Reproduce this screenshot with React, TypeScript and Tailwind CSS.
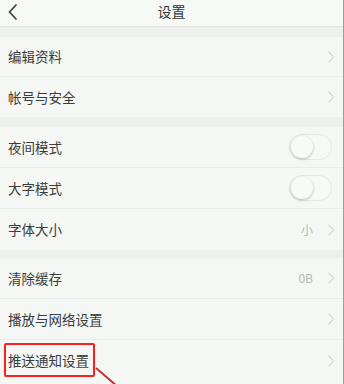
import { ReactNode } from "react";

function Chevron() {
  return (
    <svg width="8" height="14" viewBox="0 0 8 14" className="ml-2">
      <path d="M1.5 1.5 L6.5 7 L1.5 12.5" fill="none" stroke="#d6d9d6" strokeWidth="1.2" />
    </svg>
  );
}

function Toggle() {
  return (
    <div className="relative w-[43px] h-[26px] rounded-full border border-[#e4e7e4] bg-[#f7f9f7] mr-[3px]">
      <div className="absolute left-[1px] top-[1px] w-[22px] h-[22px] rounded-full bg-[#f8faf8] shadow-[0_1px_3px_rgba(0,0,0,0.25)]" />
    </div>
  );
}

function Row({
  label,
  h = "h-[41px]",
  right,
  last,
}: {
  label: ReactNode;
  h?: string;
  right?: ReactNode;
  last?: boolean;
}) {
  return (
    <div
      className={`flex items-center justify-between pl-[8px] pr-[8px] ${h} ${
        last ? "" : "border-b border-[#e9ece9]"
      }`}
    >
      <span className="text-[13.5px] text-[#3a3d3a]">{label}</span>
      <div className="flex items-center text-[12px] text-[#b4b7b4]">{right}</div>
    </div>
  );
}

export default function App() {
  return (
    <div
      className="relative w-[344px] h-[384px] overflow-hidden bg-[#f4f7f4] border-r border-[#9a9d9a]"
      style={{ fontFamily: '"Noto Sans CJK SC", "Noto Sans", sans-serif' }}
    >
      <div className="relative flex items-center justify-center h-[27px] border-b border-[#e2e5e2] bg-[#f6f9f6]">
        <svg width="12" height="18" viewBox="0 0 12 18" className="absolute left-[7px] top-[3px]">
          <path d="M9.5 1.5 L2.5 9 L9.5 16.5" fill="none" stroke="#3a3d3a" strokeWidth="1.6" />
        </svg>
        <span className="text-[14px] text-[#333633] mt-[-4px]">设置</span>
      </div>
      <div className="h-[10px] bg-[#edf0ed]" />
      <Row label="编辑资料" h="h-[40px]" right={<Chevron />} />
      <Row label="帐号与安全" h="h-[40px]" right={<Chevron />} last />
      <div className="h-[10px] bg-[#edf0ed]" />
      <Row label="夜间模式" right={<Toggle />} />
      <Row label="大字模式" right={<Toggle />} />
      <Row
        label="字体大小"
        right={
          <>
            <span className="mr-[6px]">小</span>
            <Chevron />
          </>
        }
        last
      />
      <div className="h-[8px] bg-[#edf0ed]" />
      <Row
        label="清除缓存"
        right={
          <>
            <span className="mr-[6px]">0B</span>
            <Chevron />
          </>
        }
      />
      <Row label="播放与网络设置" right={<Chevron />} />
      <Row
        label={
          <span className="relative">
            推送通知设置
            <span className="absolute left-[-4px] right-[-6px] top-[-7px] bottom-[-7px] border-[2px] border-[#ff1d1d] rounded-[2px]" />
          </span>
        }
        right={<Chevron />}
        last
      />
      <svg width="40" height="30" viewBox="0 0 40 30" className="absolute left-[94px] top-[365px]">
        <path d="M2 3 L24 22" stroke="#c8332f" strokeWidth="2" />
      </svg>
    </div>
  );
}
